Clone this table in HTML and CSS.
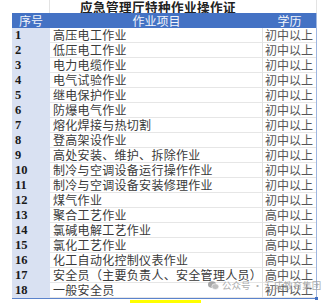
FILE: index.html
```html
<!DOCTYPE html>
<html lang="zh">
<head>
<meta charset="utf-8">
<link rel="stylesheet" href="styles.css">
</head>
<body>
<div class="page">
  <div class="title-row">
    <div class="tcell-left"></div>
    <div class="tcell-title">应急管理厅特种作业操作证</div>
  </div>
  <div class="table">
    <div class="hd c1">序号</div><div class="hd c2">作业项目</div><div class="hd c3">学历</div>
    <div class="n">1</div><div class="t">高压电工作业</div><div class="d">初中以上</div>
    <div class="n">2</div><div class="t">低压电工作业</div><div class="d">初中以上</div>
    <div class="n">3</div><div class="t">电力电缆作业</div><div class="d">初中以上</div>
    <div class="n">4</div><div class="t">电气试验作业</div><div class="d">初中以上</div>
    <div class="n">5</div><div class="t">继电保护作业</div><div class="d">初中以上</div>
    <div class="n">6</div><div class="t">防爆电气作业</div><div class="d">初中以上</div>
    <div class="n">7</div><div class="t">熔化焊接与热切割</div><div class="d">初中以上</div>
    <div class="n">8</div><div class="t">登高架设作业</div><div class="d">初中以上</div>
    <div class="n">9</div><div class="t">高处安装、维护、拆除作业</div><div class="d">初中以上</div>
    <div class="n">10</div><div class="t">制冷与空调设备运行操作作业</div><div class="d">初中以上</div>
    <div class="n">11</div><div class="t">制冷与空调设备安装修理作业</div><div class="d">初中以上</div>
    <div class="n">12</div><div class="t">煤气作业</div><div class="d">初中以上</div>
    <div class="n">13</div><div class="t">聚合工艺作业</div><div class="d">高中以上</div>
    <div class="n">14</div><div class="t">氯碱电解工艺作业</div><div class="d">高中以上</div>
    <div class="n">15</div><div class="t">氯化工艺作业</div><div class="d">高中以上</div>
    <div class="n">16</div><div class="t">化工自动化控制仪表作业</div><div class="d">高中以上</div>
    <div class="n">17</div><div class="t">安全员（主要负责人、安全管理人员）</div><div class="d">高中以上</div>
    <div class="n">18</div><div class="t">一般安全员</div><div class="d">初中以上</div>
    <span class="handle"></span>
  </div>
  <div class="yellow-row"><span class="yellow"></span></div>
  <div class="watermark">
    <svg width="11" height="9" viewBox="0 0 11 9"><ellipse cx="4" cy="3.6" rx="4" ry="3.3" fill="#9a9a9a"/><ellipse cx="7.3" cy="5.6" rx="3.5" ry="2.9" fill="#b5b5b5" stroke="#fff" stroke-width="0.6"/></svg>
    <span>公众号 · 汇成教育集团</span>
  </div>
</div>
</body>
</html>
```

FILE: styles.css
```css
html, body {
  margin: 0;
  padding: 0;
  background: #fff;
}
.page {
  position: relative;
  width: 327px;
  height: 303px;
  overflow: hidden;
  font-family: "Noto Sans CJK SC", sans-serif;
}
.title-row {
  display: flex;
  height: 13px;
}
.tcell-left {
  width: 50px;
  border-right: 1px solid #e3e3e3;
  box-sizing: border-box;
}
.tcell-title {
  width: 267px;
  border-right: 1px solid #e3e3e3;
  box-sizing: border-box;
  text-align: center;
  padding-right: 50px;
  font-weight: 700;
  font-size: 12.6px;
  line-height: 13px;
  color: #222;
  letter-spacing: 0.4px;
}
.table {
  position: relative;
  margin-left: 12px;
  width: 304px;
  display: grid;
  grid-template-columns: 38px 213px 53px;
  grid-auto-rows: 15px;
  border-bottom: 1px solid #5b83cc;
  border-right: 1px solid #9fb6e0;
  box-sizing: content-box;
}
.hd {
  background: #4472c4;
  color: #f2f5fb;
  font-size: 12px;
  line-height: 15px;
  text-align: center;
}
.n {
  background: #d9e1f2;
  font-family: "Liberation Serif", serif;
  font-weight: 700;
  font-size: 12.5px;
  line-height: 15px;
  padding-left: 3px;
  color: #1a1a1a;
}
.t, .d {
  box-sizing: border-box;
  border-bottom: 1px solid #e6e6e6;
  font-size: 12px;
  line-height: 14px;
  white-space: nowrap;
  overflow: visible;
}
.t {
  padding-left: 3px;
  color: #3a3a3a;
  letter-spacing: 0.3px;
  border-right: 1px solid #e0e0e0;
}
.d {
  padding-left: 2px;
  color: #555;
}
.handle {
  position: absolute;
  right: -2px;
  bottom: -2px;
  width: 3px;
  height: 3px;
  background: #4472c4;
}
.yellow-row {
  height: 4px;
  position: relative;
}
.yellow {
  position: absolute;
  left: 130px;
  top: 1px;
  width: 71px;
  height: 3px;
  background: #ffff00;
}
.watermark {
  position: absolute;
  left: 208px;
  top: 278px;
  display: flex;
  align-items: center;
  gap: 3px;
  font-size: 9.5px;
  color: #a0a0a0;
  opacity: 0.85;
  white-space: nowrap;
}
```
